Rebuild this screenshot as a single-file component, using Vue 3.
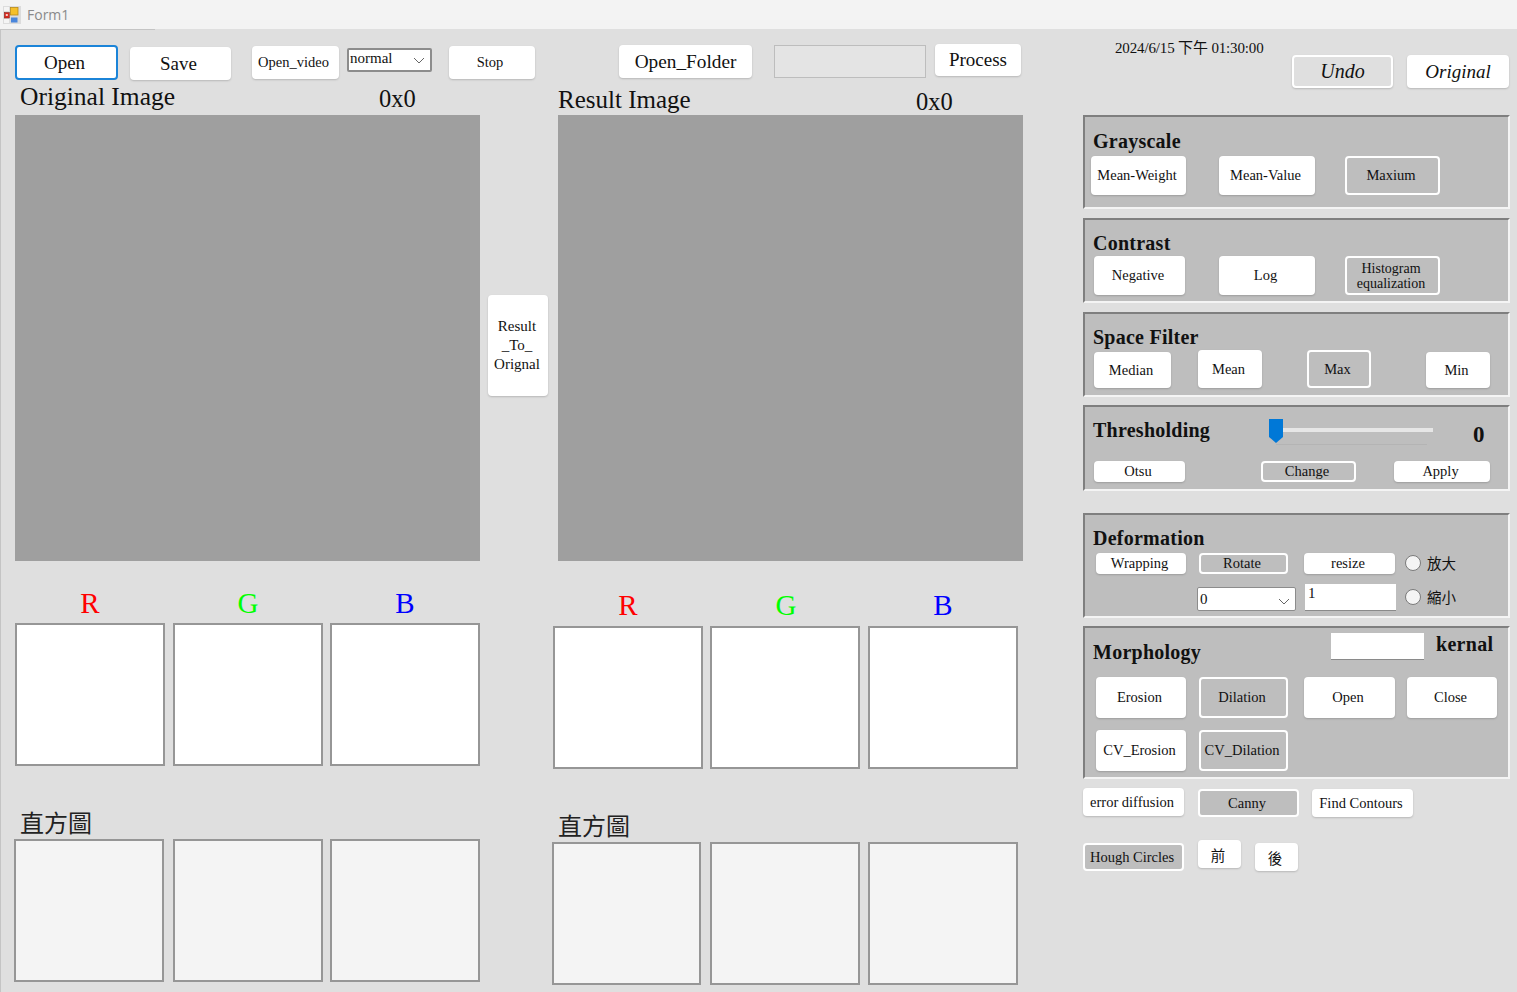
<template>
  <div class="form">
    <header class="titlebar">
      <svg class="app-icon" width="18" height="18" viewBox="0 0 18 18">
        <rect x="0" y="0" width="18" height="18" fill="#dcdcdc" />
        <rect x="1" y="1" width="5" height="4" fill="#f4f4f4" />
        <rect x="1" y="13" width="5" height="4" fill="#f4f4f4" />
        <rect x="7.5" y="1.5" width="7.5" height="7.5" fill="#f5c02a" stroke="#b98a18" stroke-width="0.8" />
        <rect x="1.3" y="6.5" width="5" height="5.5" fill="#d8281f" stroke="#8c2a24" stroke-width="0.6" />
        <rect x="2.8" y="8" width="2" height="2" fill="#f6d0c8" />
        <rect x="8" y="11.5" width="6.5" height="5" fill="#4a86dc" />
      </svg>
      <span class="title-text">Form1</span>
    </header>
    <div class="title-line"></div>

    <main class="client">
      <!-- original image column -->
      <section class="col col-left">
        <div class="toolbar">
          <button class="btn open-btn">Open</button>
          <button class="btn save-btn">Save</button>
          <button class="btn video-btn">Open_video</button>
          <div class="select mode-select">
            <span>normal</span>
            <svg class="chev" width="12" height="7" viewBox="0 0 12 7"><path d="M1 1l5 5 5-5" fill="none" stroke="#666" stroke-width="1" /></svg>
          </div>
          <button class="btn stop-btn">Stop</button>
        </div>
        <div class="image-head">
          <span class="image-title">Original Image</span>
          <span class="image-size">0x0</span>
        </div>
        <div class="image-box"></div>
        <div class="rgb-labels">
          <span class="red">R</span><span class="green">G</span><span class="blue">B</span>
        </div>
        <div class="boxes">
          <div class="box"></div><div class="box"></div><div class="box"></div>
        </div>
        <div class="hist-title">直方圖</div>
        <div class="boxes hist-boxes">
          <div class="box hist"></div><div class="box hist"></div><div class="box hist"></div>
        </div>
      </section>

      <div class="col-mid">
        <button class="btn swap-btn">Result<br />_To_<br />Orignal</button>
      </div>

      <!-- result image column -->
      <section class="col col-right">
        <div class="toolbar toolbar-right">
          <button class="btn folder-btn">Open_Folder</button>
          <div class="path-box"></div>
          <button class="btn process-btn">Process</button>
        </div>
        <div class="image-head result-head">
          <span class="image-title">Result Image</span>
          <span class="image-size">0x0</span>
        </div>
        <div class="image-box result-image"></div>
        <div class="rgb-labels result-labels">
          <span class="red">R</span><span class="green">G</span><span class="blue">B</span>
        </div>
        <div class="boxes result-boxes">
          <div class="box"></div><div class="box"></div><div class="box"></div>
        </div>
        <div class="hist-title result-hist">直方圖</div>
        <div class="boxes result-boxes hist-boxes">
          <div class="box hist"></div><div class="box hist"></div><div class="box hist"></div>
        </div>
      </section>

      <!-- tool panel -->
      <aside class="panel">
        <div class="panel-top">
          <span class="clock">2024/6/15 下午 01:30:00</span>
          <button class="btn italic undo-btn flat-top">Undo</button>
          <button class="btn italic original-btn">Original</button>
        </div>

        <div class="group g-gray">
          <div class="group-title">Grayscale</div>
          <div class="row">
            <button class="btn sm w95 ml6">Mean-Weight</button>
            <button class="btn sm w96 ml33">Mean-Value</button>
            <button class="btn sm w95 ml30 flat">Maxium</button>
          </div>
        </div>

        <div class="group g-contrast">
          <div class="group-title">Contrast</div>
          <div class="row">
            <button class="btn sm w91 ml9">Negative</button>
            <button class="btn sm w96 ml34">Log</button>
            <button class="btn sm w95 ml30 flat two-line">Histogram<br />equalization</button>
          </div>
        </div>

        <div class="group g-space">
          <div class="group-title">Space Filter</div>
          <div class="row space-row">
            <button class="btn sm median-btn">Median</button>
            <button class="btn sm mean-btn">Mean</button>
            <button class="btn sm max-btn flat">Max</button>
            <button class="btn sm min-btn">Min</button>
          </div>
        </div>

        <div class="group g-thresh">
          <div class="thresh-top">
            <div class="group-title">Thresholding</div>
            <div class="slider">
              <div class="slider-track"></div>
              <div class="slider-ticks"></div>
              <svg class="slider-thumb" width="14" height="24" viewBox="0 0 14 24"><path d="M0 0h14v18l-7 6-7-6z" fill="#0078d7" /></svg>
            </div>
            <span class="thresh-value">0</span>
          </div>
          <div class="row thresh-row">
            <button class="btn sm w91 ml9">Otsu</button>
            <button class="btn sm w95 change-btn flat">Change</button>
            <button class="btn sm apply-btn">Apply</button>
          </div>
        </div>

        <div class="group g-deform">
          <div class="group-title">Deformation</div>
          <div class="row deform-row">
            <button class="btn sm w90 ml11">Wrapping</button>
            <button class="btn sm w89 ml13 flat">Rotate</button>
            <button class="btn sm w91 ml16">resize</button>
            <span class="radio-wrap"><i class="radio"></i>放大</span>
          </div>
          <div class="row deform-row2">
            <div class="select angle-select">
              <span>0</span>
              <svg class="chev" width="12" height="7" viewBox="0 0 12 7"><path d="M1 1l5 5 5-5" fill="none" stroke="#666" stroke-width="1" /></svg>
            </div>
            <div class="num-box">1</div>
            <span class="radio-wrap shrink-radio"><i class="radio"></i>縮小</span>
          </div>
        </div>

        <div class="group g-morph">
          <div class="morph-head">
            <div class="group-title">Morphology</div>
            <div class="kernel-box"></div>
            <span class="kernel-label">kernal</span>
          </div>
          <div class="row morph-row">
            <button class="btn sm w90 ml11">Erosion</button>
            <button class="btn sm w89 ml13 flat">Dilation</button>
            <button class="btn sm w91 ml16">Open</button>
            <button class="btn sm w90 ml12">Close</button>
          </div>
          <div class="row morph-row morph-row2">
            <button class="btn sm w90 ml11">CV_Erosion</button>
            <button class="btn sm w89 ml13 flat">CV_Dilation</button>
          </div>
        </div>

        <div class="row loose-row">
          <button class="btn sm loose w101 up1">error diffusion</button>
          <button class="btn sm loose w101 ml14 flat">Canny</button>
          <button class="btn sm loose w101 ml13">Find Contours</button>
        </div>
        <div class="row loose-row second">
          <button class="btn sm loose w101 flat">Hough Circles</button>
          <button class="btn sm loose hanzi ml14 up3">前</button>
          <button class="btn sm loose hanzi ml14">後</button>
        </div>
      </aside>
    </main>
  </div>
</template>

<script setup>
// static mock of the WinForms window, nothing to wire up
</script>

<style>
html,
body {
  margin: 0;
  background: #dfdfdf;
}
</style>

<style scoped>
.form {
  width: 1517px;
  height: 992px;
  overflow: hidden;
  font-family: "Liberation Serif", "Noto Sans CJK TC", serif;
  color: #111;
  background: #dfdfdf;
}

.titlebar {
  height: 29px;
  display: flex;
  align-items: center;
  background: #f3f3f3;
  font-family: "Open Sans", "Noto Sans", sans-serif;
}

.app-icon {
  margin: 0 0 0 3px;
}

.title-text {
  margin-left: 6px;
  font-size: 14px;
  color: #8a8a8a;
}

.title-line {
  width: 155px;
  height: 1px;
  background: #c4c4c4;
}

.client {
  display: flex;
  height: 962px;
  box-sizing: border-box;
  border-left: 1px solid #c4c4c4;
}

.col-left {
  width: 465px;
  margin-left: 14px;
}

.col-mid {
  width: 73px;
  padding: 265px 0 0 8px;
  box-sizing: border-box;
}

.col-right {
  width: 530px;
}

.toolbar {
  height: 55px;
  display: flex;
  align-items: flex-start;
  padding-top: 15px;
  box-sizing: border-box;
}

.btn {
  display: block;
  padding: 0;
  border: 0;
  border-radius: 4px;
  background: #fff;
  color: #111;
  font-family: inherit;
  text-align: center;
  box-shadow: 0 1px 2px rgba(0, 0, 0, 0.18);
  flex: none;
}

.open-btn {
  width: 103px;
  height: 35px;
  padding-right: 4px;
  font-size: 19px;
  border: 2px solid #1b84d8;
  box-shadow: none;
  box-sizing: border-box;
}

.save-btn {
  width: 101px;
  height: 33px;
  margin: 2px 0 0 12px;
  padding-right: 4px;
  font-size: 19px;
}

.video-btn {
  width: 87px;
  height: 33px;
  margin: 1px 0 0 21px;
  padding-right: 4px;
  font-size: 14.5px;
}

.select {
  display: flex;
  flex: none;
  align-items: center;
  justify-content: space-between;
  box-sizing: border-box;
  background: #fff;
  border: 2px solid #8c8c8c;
  border-radius: 2px;
  font-size: 15px;
}

.mode-select {
  width: 85px;
  height: 24px;
  margin: 3px 0 0 8px;
  padding: 0 5px 3px 1px;
}

.chev {
  margin-top: 4px;
}

.stop-btn {
  width: 86px;
  height: 33px;
  margin: 1px 0 0 17px;
  padding-right: 4px;
  font-size: 14.5px;
}

.image-head {
  height: 30px;
  position: relative;
  padding-left: 5px;
  line-height: 24px;
}

.image-title {
  font-size: 25.5px;
}

.image-size {
  position: absolute;
  left: 364px;
  top: 2px;
  font-size: 24.5px;
}

.image-box {
  width: 465px;
  height: 446px;
  background: #9f9f9f;
}

.rgb-labels {
  width: 465px;
  height: 62px;
  padding-bottom: 2px;
  box-sizing: border-box;
  display: grid;
  grid-template-columns: 150px 166px 148px;
  align-items: end;
  text-align: center;
  font-size: 29px;
  line-height: 36px;
}

.red {
  color: #ff0000;
}

.green {
  color: #00ff00;
}

.blue {
  color: #0000ff;
}

.boxes {
  display: flex;
}

.box {
  width: 150px;
  height: 143px;
  box-sizing: border-box;
  background: #fff;
  border: 2px solid #969696;
}

.boxes .box:nth-child(2) {
  margin-left: 8px;
}

.boxes .box:nth-child(3) {
  margin-left: 7px;
}

.hist {
  background: #f4f4f4;
}

.hist-boxes .box:first-child {
  margin-left: -1px;
}

.hist-boxes .box:nth-child(2) {
  margin-left: 9px;
}

.hist-title {
  height: 73px;
  padding-left: 5px;
  box-sizing: border-box;
  display: flex;
  align-items: flex-end;
  font-size: 24px;
  line-height: 30px;
  color: #222;
}

.swap-btn {
  width: 60px;
  height: 101px;
  padding-right: 2px;
  font-size: 15px;
  line-height: 19px;
}

.toolbar-right {
  padding-left: 66px;
}

.folder-btn {
  width: 133px;
  height: 33px;
  font-size: 19.3px;
}

.path-box {
  width: 152px;
  height: 33px;
  margin-left: 22px;
  box-sizing: border-box;
  background: #e4e4e4;
  border: 1px solid #bdbdbd;
}

.process-btn {
  width: 86px;
  height: 32px;
  margin: -1px 0 0 9px;
  font-size: 19px;
}

.result-head {
  margin-left: 5px;
}

.result-head .image-title {
  position: relative;
  top: 3px;
  left: -5px;
  font-size: 25px;
}

.result-head .image-size {
  left: 358px;
  top: 5px;
}

.result-image {
  margin-left: 5px;
}

.result-labels {
  height: 65px;
  padding-bottom: 3px;
}

.result-boxes .box:nth-child(2) {
  margin-left: 7px;
}

.result-boxes .box:nth-child(3) {
  margin-left: 8px;
}

.result-boxes.hist-boxes .box:first-child {
  width: 149px;
}

.result-boxes.hist-boxes .box:nth-child(2) {
  margin-left: 9px;
}

.result-hist {
  height: 73px;
}

.panel {
  width: 427px;
}

.panel-top {
  height: 85px;
  position: relative;
}

.clock {
  position: absolute;
  left: 32px;
  top: 6px;
  font-size: 15px;
  letter-spacing: -0.15px;
  white-space: nowrap;
}

.panel-top .btn {
  position: absolute;
  top: 25px;
  height: 33px;
}

.italic {
  font-style: italic;
  font-size: 20px;
}

.undo-btn {
  left: 209px;
  width: 101px;
}

.original-btn {
  left: 324px;
  width: 102px;
  font-size: 19px;
}

.flat-top {
  background: #dfdfdf;
  border: 2px solid #fff;
  box-sizing: border-box;
}

.group {
  box-sizing: border-box;
  background: #bebebe;
  border: 2px solid;
  border-color: #7f7f7f #f4f4f4 #f4f4f4 #7f7f7f;
}

.group-title {
  padding-left: 8px;
  font-size: 20px;
  font-weight: 700;
  letter-spacing: 0.25px;
  line-height: 24px;
}

.row {
  display: flex;
}

.sm {
  padding-right: 3px;
  font-size: 14.5px;
  height: 100%;
}

.flat {
  background: #bebebe;
  border: 2px solid #fff;
  box-sizing: border-box;
  box-shadow: none;
}

.g-gray {
  height: 94px;
  margin-bottom: 9px;
  padding-top: 12px;
}

.g-gray .row {
  height: 39px;
  margin-top: 3px;
}

.g-contrast {
  height: 85px;
  margin-bottom: 9px;
  padding-top: 11px;
}

.g-contrast .row {
  height: 39px;
  margin-top: 1px;
}

.two-line {
  font-size: 14px;
  line-height: 15px;
}

.g-space {
  height: 85px;
  margin-bottom: 8px;
  padding-top: 11px;
}

.space-row {
  height: 38px;
  margin-top: 1px;
}

.median-btn {
  width: 77px;
  margin: 2px 0 0 9px;
  height: 36px;
}

.mean-btn {
  width: 64px;
  margin-left: 27px;
}

.max-btn {
  width: 64px;
  margin-left: 45px;
}

.min-btn {
  width: 64px;
  margin: 2px 0 0 55px;
  height: 36px;
}

.g-thresh {
  height: 86px;
  margin-bottom: 22px;
}

.thresh-top {
  height: 54px;
  position: relative;
  padding-top: 11px;
  box-sizing: border-box;
}

.slider {
  position: absolute;
  left: 184px;
  top: 12px;
  width: 164px;
  height: 30px;
}

.slider-track {
  position: absolute;
  left: 10px;
  top: 9px;
  width: 154px;
  height: 4px;
  background: #e6e6e6;
}

.slider-ticks {
  position: absolute;
  left: 7px;
  top: 25px;
  width: 151px;
  height: 1px;
  background: #b4b4b4;
}

.slider-thumb {
  position: absolute;
  left: 0;
  top: 0;
}

.thresh-value {
  position: absolute;
  left: 388px;
  top: 15px;
  font-size: 23px;
  font-weight: 700;
}

.thresh-row {
  height: 21px;
}

.change-btn {
  margin-left: 76px;
}

.apply-btn {
  width: 96px;
  margin-left: 38px;
}

.g-deform {
  height: 105px;
  margin-bottom: 8px;
  padding-top: 11px;
}

.deform-row {
  height: 21px;
  margin-top: 3px;
  align-items: center;
}

.deform-row2 {
  height: 27px;
  margin-top: 10px;
  align-items: flex-end;
  padding-left: 112px;
}

.radio-wrap {
  display: flex;
  align-items: center;
  margin-left: 10px;
  margin-top: -2px;
  font-size: 14.5px;
  white-space: nowrap;
  font-family: "Noto Sans CJK TC", sans-serif;
}

.radio {
  width: 16px;
  height: 16px;
  margin-right: 6px;
  box-sizing: border-box;
  border: 1.5px solid #7a7a7a;
  border-radius: 50%;
  background: #f4f4f4;
}

.shrink-radio {
  margin-left: 9px;
  align-self: center;
}

.angle-select {
  width: 99px;
  height: 24px;
  padding: 0 5px 0 2px;
  border-width: 1px;
  font-size: 15px;
}

.num-box {
  width: 91px;
  height: 27px;
  margin-left: 9px;
  padding: 1px 0 0 3px;
  box-sizing: border-box;
  background: #fff;
  border-bottom: 1px solid #8a8a8a;
  font-size: 15px;
}

.g-morph {
  height: 153px;
}

.morph-head {
  height: 49px;
  position: relative;
}

.morph-head .group-title {
  position: absolute;
  top: 12px;
  left: 0;
}

.kernel-box {
  position: absolute;
  left: 246px;
  top: 5px;
  width: 93px;
  height: 27px;
  background: #fff;
  border-bottom: 1px solid #8a8a8a;
  box-sizing: border-box;
}

.kernel-label {
  position: absolute;
  left: 351px;
  top: 5px;
  font-size: 20px;
  font-weight: 700;
  letter-spacing: 0.3px;
}

.morph-row {
  height: 41px;
}

.morph-row2 {
  margin-top: 12px;
}

.loose-row {
  height: 28px;
  margin-top: 10px;
}

.loose-row.second {
  margin-top: 26px;
}

.up1 {
  margin-top: -1px;
}

.up3 {
  margin-top: -3px;
}

.hanzi {
  width: 43px;
  font-family: "Noto Sans CJK TC", serif;
}

.w89 { width: 89px; }
.w90 { width: 90px; }
.w91 { width: 91px; }
.w95 { width: 95px; }
.w96 { width: 96px; }
.w101 { width: 101px; }
.ml6 { margin-left: 6px; }
.ml9 { margin-left: 9px; }
.ml11 { margin-left: 11px; }
.ml12 { margin-left: 12px; }
.ml13 { margin-left: 13px; }
.ml14 { margin-left: 14px; }
.ml16 { margin-left: 16px; }
.ml30 { margin-left: 30px; }
.ml33 { margin-left: 33px; }
.ml34 { margin-left: 34px; }
</style>
